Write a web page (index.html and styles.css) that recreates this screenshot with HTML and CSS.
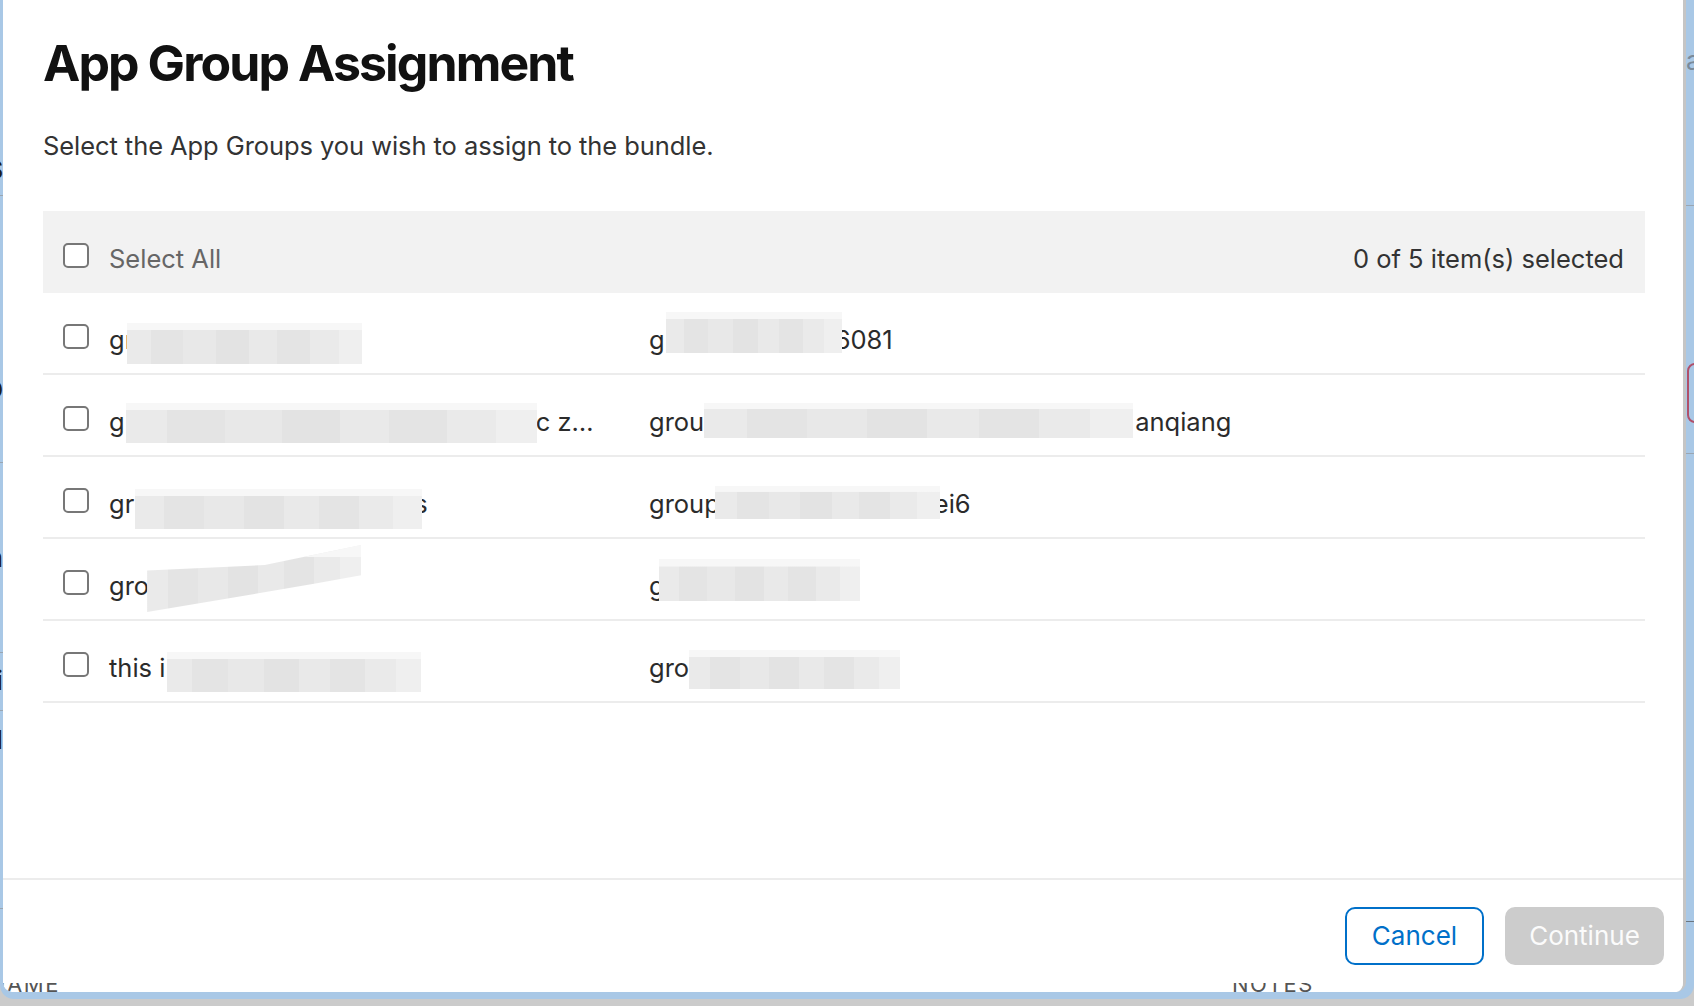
FILE: index.html
```html
<!DOCTYPE html>
<html lang="en">
<head>
<meta charset="utf-8">
<title>App Group Assignment</title>
<link rel="stylesheet" href="styles.css">
</head>
<body>
<div class="frame">
  <div class="window">
    <div class="dialog" role="dialog" aria-labelledby="dlg-title">
      <div class="dialog-body">
        <h1 id="dlg-title" class="title">App Group Assignment</h1>
        <p class="lead">Select the App Groups you wish to assign to the bundle.</p>

        <div class="table">
          <div class="thead">
            <span class="cb"></span>
            <span class="select-all">Select All</span>
            <span class="count">0 of 5 item(s) selected</span>
          </div>

          <div class="row">
            <span class="cb"></span>
            <span class="c1">gr<span class="rd rd-1a"></span></span>
            <span class="c2">g<span class="rd rd-1b"></span>6081</span>
          </div>

          <div class="row">
            <span class="cb"></span>
            <span class="c1">g<span class="rd rd-2a"></span>c z…</span>
            <span class="c2">grou<span class="rd rd-2b"></span>anqiang</span>
          </div>

          <div class="row">
            <span class="cb"></span>
            <span class="c1">gr<span class="rd rd-3a"></span>s</span>
            <span class="c2">group<span class="rd rd-3b"></span>ei6</span>
          </div>

          <div class="row">
            <span class="cb"></span>
            <span class="c1">gro<span class="rd rd-4a"></span></span>
            <span class="c2">g<span class="rd rd-4b"></span></span>
          </div>

          <div class="row">
            <span class="cb"></span>
            <span class="c1">this i<span class="rd rd-5a"></span></span>
            <span class="c2">gro<span class="rd rd-5b"></span></span>
          </div>
        </div>
      </div>

      <div class="dialog-footer">
        <button class="btn btn-cancel" type="button">Cancel</button>
        <button class="btn btn-continue" type="button" disabled>Continue</button>
      </div>
    </div>

    <div class="peek">
      <span class="peek-name">NAME</span>
      <span class="peek-notes">NOTES</span>
    </div>
  </div>
</div>

<div class="edge edge-left">
  <span class="frag frag-1">S</span>
  <span class="frag frag-2">D</span>
  <span class="frag frag-3">n</span>
  <span class="frag frag-4">i</span>
  <span class="frag frag-5">l</span>
  <i class="eline eline-1"></i>
  <i class="eline eline-2"></i>
  <i class="eline eline-3"></i>
  <i class="eline eline-4"></i>
  <i class="eline eline-5"></i>
</div>
<div class="edge edge-right">
  <span class="rfrag">a</span>
  <i class="eline eline-r1"></i>
  <i class="eline eline-r2"></i>
  <i class="eline eline-r3"></i>
  <span class="red-box"></span>
</div>
</body>
</html>
```

FILE: styles.css
```css
* { box-sizing: border-box; }

html, body {
  margin: 0;
  padding: 0;
}

body {
  width: 1694px;
  height: 1006px;
  overflow: hidden;
  position: relative;
  background: #cbcbcb;
  font-family: Inter, "Noto Sans", "Liberation Sans", sans-serif;
  color: #2b2b2b;
}

/* macOS window highlight + browser window */
.frame {
  height: 999px;
  background: #a9c8e6;
  border-radius: 0 0 14px 14px;
  padding: 0 8px 7px 3px;
}

.window {
  position: relative;
  height: 992px;
  background: #fff;
  border-right: 3px solid #c5c5c5;
  border-radius: 0 0 10px 10px;
  overflow: hidden;
}

/* dialog */
.dialog {
  position: absolute;
  inset: 0;
  display: flex;
  flex-direction: column;
  background: #fff;
}

.dialog-body {
  flex: 1;
  padding: 33px 38px 0 40px;
}

.title {
  margin: 0;
  font-size: 50px;
  line-height: 61px;
  font-weight: 700;
  color: #111;
  letter-spacing: -1.9px;
}

.lead {
  margin: 34px 0 0;
  font-size: 25.5px;
  line-height: 36px;
  color: #333;
  letter-spacing: -0.07px;
}

.table {
  margin-top: 47px;
  font-size: 25.5px;
  line-height: 36px;
}

.thead {
  display: flex;
  align-items: baseline;
  height: 82px;
  padding: 30px 21px 0 20px;
  background: #f2f2f2;
}

.select-all {
  color: #666;
}

.count {
  margin-left: auto;
  color: #333;
}

.row {
  display: flex;
  align-items: baseline;
  height: 82px;
  padding: 29px 0 0 20px;
  border-bottom: 2px solid #ececec;
  white-space: nowrap;
}

.cb {
  display: inline-block;
  flex: none;
  width: 26px;
  height: 25px;
  margin-right: 20px;
  border: 2px solid #777;
  border-radius: 5px;
  background: #fff;
}

.row .cb {
  margin-bottom: 2px;
}

.c1 {
  flex: none;
  width: 540px;
  color: #2b2b2b;
}

.c2 {
  flex: 1;
  color: #2b2b2b;
}

/* redaction overlays (mosaic blur over hidden text) */
.rd {
  display: inline-block;
  position: relative;
  height: 0;
  width: 0;
  vertical-align: baseline;
}

.rd::before {
  content: "";
  position: absolute;
  background:
    linear-gradient(#f7f7f7, #f7f7f7) top / 100% 18% no-repeat,
    linear-gradient(90deg,
      #eaeaea 0 10%, #e4e4e4 10% 24%, #e8e8e8 24% 38%, #e3e3e3 38% 52%,
      #e9e9e9 52% 64%, #e4e4e4 64% 78%, #eaeaea 78% 90%, #efefef 90% 100%);
}

.rd-1a::before { left: -7px; width: 235px; top: -26px; height: 41px; }

.rd-1b { width: 170px; }
.rd-1b::before { left: 1px; width: 176px; top: -37px; height: 41px; }

.rd-2a { width: 411px; }
.rd-2a::before { left: 1px; width: 411px; top: -28px; height: 40px; }

.rd-2b { width: 431px; }
.rd-2b::before { left: 0; width: 429px; top: -28px; height: 35px; }

.rd-3a { width: 280px; }
.rd-3a::before { left: 1px; width: 287px; top: -24px; height: 40px; }

.rd-3b { width: 214px; }
.rd-3b::before { left: -5px; width: 225px; top: -27px; height: 33px; }

.rd-4a::before {
  left: -2px;
  width: 214px;
  top: -50px;
  height: 67px;
  clip-path: polygon(0 38%, 55% 30%, 100% 0, 100% 45%, 78% 58%, 0 100%);
}

.rd-4b::before { left: -6px; width: 201px; top: -36px; height: 42px; }

.rd-5a::before { left: 2px; width: 254px; top: -25px; height: 40px; }

.rd-5b::before { left: 0; width: 211px; top: -27px; height: 39px; }

/* footer */
.dialog-footer {
  display: flex;
  justify-content: flex-end;
  gap: 21px;
  padding: 27px 19px 27px 40px;
  border-top: 2px solid #ececec;
}

.btn {
  height: 58px;
  border-radius: 10px;
  font-family: inherit;
  font-size: 26px;
  line-height: 1;
  padding: 0;
  text-align: center;
}

.btn-cancel {
  width: 139px;
  border: 2px solid #0070c9;
  background: #fff;
  color: #0070c9;
}

.btn-continue {
  width: 159px;
  border: 2px solid #cccccc;
  background: #cccccc;
  color: #fbfbfb;
}

/* page content peeking below the dialog */
.peek {
  position: absolute;
  left: 0;
  right: 0;
  top: 983px;
  height: 9px;
  overflow: hidden;
  pointer-events: none;
}

.peek span {
  position: absolute;
  top: -10px;
  font-size: 22px;
  line-height: 22px;
  letter-spacing: 1.5px;
  color: #555;
}

.peek-name { left: -14px; }
.peek-notes { left: 1229px; }

/* fragments of the page behind, visible at the window edges */
.edge {
  position: absolute;
  top: 0;
  height: 1006px;
  overflow: hidden;
  pointer-events: none;
}

.edge-left { left: 0; width: 3px; }
.edge-right { left: 1686px; width: 8px; }

.frag {
  position: absolute;
  right: 0;
  font-size: 26px;
  line-height: 26px;
  color: #1d1d1f;
}

.frag-1 { top: 157px; font-weight: 700; }
.frag-2 { top: 377px; font-weight: 700; }
.frag-3 { top: 545px; }
.frag-4 { top: 668px; }
.frag-5 { top: 727px; }

.eline {
  position: absolute;
  left: 0;
  right: 0;
  height: 1px;
  background: #9aa6b2;
}

.eline-1 { top: 195px; }
.eline-2 { top: 462px; }
.eline-3 { top: 652px; }
.eline-4 { top: 710px; }
.eline-5 { top: 908px; }
.eline-r1 { top: 205px; }
.eline-r2 { top: 453px; }
.eline-r3 { top: 921px; background: #6b7680; }

.rfrag {
  position: absolute;
  left: 0;
  top: 48px;
  font-size: 26px;
  line-height: 26px;
  color: #7a8a99;
}

.red-box {
  position: absolute;
  left: 1px;
  top: 363px;
  width: 40px;
  height: 60px;
  border: 2px solid #b0506a;
  border-radius: 8px;
}
```
